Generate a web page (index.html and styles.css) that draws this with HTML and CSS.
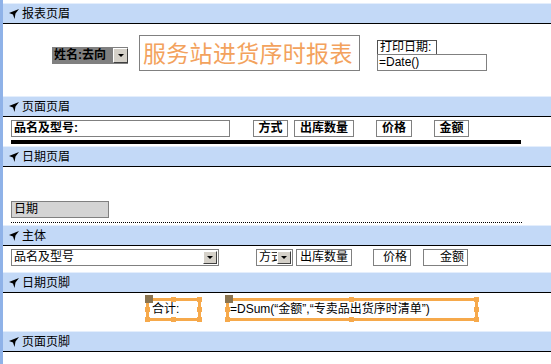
FILE: index.html
```html
<!DOCTYPE html>
<html>
<head>
<meta charset="utf-8">
<link rel="stylesheet" href="styles.css">
</head>
<body>
<div class="report">
  <div class="bar"><svg class="ico" viewBox="0 0 10 10"><path d="M10 0 L0 4 L4 5.5 L5.5 10 L6.5 4.5 Z"/></svg><span>报表页眉</span></div>
  <div class="sec sec-rh">
    <div class="name-combo"><span class="name-text">姓名:去向</span><span class="btn"><i class="tri"></i></span></div>
    <div class="title-box">服务站进货序时报表</div>
    <div class="date-group">
      <div class="date-label">打印日期:</div>
      <div class="date-expr">=Date()</div>
    </div>
  </div>

  <div class="bar"><svg class="ico" viewBox="0 0 10 10"><path d="M10 0 L0 4 L4 5.5 L5.5 10 L6.5 4.5 Z"/></svg><span>页面页眉</span></div>
  <div class="sec sec-ph">
    <div class="row ph-row">
      <div class="box bold ph1">品名及型号:</div>
      <div class="box bold center ph2">方式</div>
      <div class="box bold center ph3">出库数量</div>
      <div class="box bold center ph4">价格</div>
      <div class="box bold center ph5">金额</div>
    </div>
    <div class="thick-line"></div>
  </div>

  <div class="bar"><svg class="ico" viewBox="0 0 10 10"><path d="M10 0 L0 4 L4 5.5 L5.5 10 L6.5 4.5 Z"/></svg><span>日期页眉</span></div>
  <div class="sec sec-dh">
    <div class="box gray date-box">日期</div>
    <div class="dotted"></div>
  </div>

  <div class="bar"><svg class="ico" viewBox="0 0 10 10"><path d="M10 0 L0 4 L4 5.5 L5.5 10 L6.5 4.5 Z"/></svg><span>主体</span></div>
  <div class="sec sec-body">
    <div class="row body-row">
      <div class="box combo d1"><span class="ctext">品名及型号</span><span class="btn small"><i class="tri"></i></span></div>
      <div class="box combo d2"><span class="ctext">方式</span><span class="btn small"><i class="tri"></i></span></div>
      <div class="box center d3">出库数量</div>
      <div class="box right d4">价格</div>
      <div class="box right d5">金额</div>
    </div>
  </div>

  <div class="bar"><svg class="ico" viewBox="0 0 10 10"><path d="M10 0 L0 4 L4 5.5 L5.5 10 L6.5 4.5 Z"/></svg><span>日期页脚</span></div>
  <div class="sec sec-df">
    <div class="row df-row">
      <div class="sel s1"><span class="stext">合计:</span>
        <i class="mv"></i><i class="h h-tm"></i><i class="h h-tr"></i><i class="h h-rm"></i><i class="h h-br"></i><i class="h h-bm"></i><i class="h h-bl"></i><i class="h h-lm"></i>
      </div>
      <div class="sel s2"><span class="stext">=DSum(“金额”,“专卖品出货序时清单”)</span>
        <i class="mv"></i><i class="h h-tm"></i><i class="h h-tr"></i><i class="h h-rm"></i><i class="h h-br"></i><i class="h h-bm"></i><i class="h h-bl"></i><i class="h h-lm"></i>
      </div>
    </div>
  </div>

  <div class="bar"><svg class="ico" viewBox="0 0 10 10"><path d="M10 0 L0 4 L4 5.5 L5.5 10 L6.5 4.5 Z"/></svg><span>页面页脚</span></div>
  <div class="sec sec-pf"></div>
</div>
</body>
</html>
```

FILE: styles.css
```css
* { box-sizing: border-box; }
html, body { margin: 0; padding: 0; background: #fff; }
body {
  font-family: "Liberation Sans", "Noto Sans CJK SC", sans-serif;
  font-size: 12px;
  color: #000;
  width: 551px;
  height: 364px;
  overflow: hidden;
}
.report {
  border-left: 3px solid #8fb2e8;
  padding-top: 3px;
  height: 364px;
  background: #fff;
}
.bar {
  height: 21px;
  background: #c3d9f7;
  border-top: 1px solid #e4eefc;
  border-bottom: 1px solid #000;
  display: flex;
  align-items: center;
  padding-left: 6px;
  line-height: 1;
}
.bar span { font-size: 12px; }
.ico { width: 10px; height: 10px; margin-right: 3px; fill: #000; }

.sec { position: relative; display: flow-root; overflow: hidden; }
.sec-rh { height: 72px; display: flex; align-items: flex-start; overflow: visible; }
.sec-ph { height: 29px; }
.sec-dh { height: 58px; }
.sec-body { height: 26px; }
.sec-df { height: 38px; overflow: visible; }
.sec-pf { height: 20px; }

.row { display: flex; align-items: flex-start; }

/* report header */
.name-combo {
  margin-left: 49px;
  margin-top: 23px;
  width: 76px;
  height: 17px;
  background: #808080;
  display: flex;
  align-items: center;
}
.name-text { font-weight: bold; padding-left: 2px; width: 61px; white-space: nowrap; overflow: hidden; line-height: 17px; }
.btn {
  width: 15px;
  height: 15px;
  background: #d4d0c8;
  border-top: 1px solid #fff;
  border-left: 1px solid #fff;
  border-right: 1px solid #404040;
  border-bottom: 1px solid #404040;
  display: flex;
  align-items: center;
  justify-content: center;
  flex: none;
}
.btn.small { width: 14px; height: 13px; }
.tri {
  width: 0; height: 0;
  border-left: 3px solid transparent;
  border-right: 3px solid transparent;
  border-top: 3px solid #000;
}
.title-box {
  margin-left: 11px;
  margin-top: 11px;
  width: 221px;
  height: 36px;
  border: 1px solid #808080;
  color: #f3a25d;
  font-family: "Noto Sans CJK SC", sans-serif;
  font-size: 23px;
  line-height: 32px;
  padding-left: 3px;
  white-space: nowrap;
  letter-spacing: 0.3px;
}
.date-group { margin-left: 17px; margin-top: 16px; display: flex; flex-direction: column; }
.date-label {
  width: 60px; height: 15px;
  border: 1px solid #505050;
  line-height: 13px;
  padding-left: 2px;
  white-space: nowrap;
}
.date-expr {
  width: 110px; height: 17px;
  margin-top: -1px;
  border: 1px solid #808080;
  line-height: 15px;
  padding-left: 1px;
}

/* boxes */
.box {
  height: 17px;
  border: 1px solid #808080;
  background: #fff;
  line-height: 15px;
  padding-left: 2px;
  white-space: nowrap;
  overflow: hidden;
}
.bold { font-weight: bold; }
.center { text-align: center; padding-left: 0; }
.right { text-align: right; padding-right: 3px; }
.gray { background: #d4d4d4; }

.ph-row { margin-top: 3px; }
.ph1 { margin-left: 8px; width: 219px; }
.ph2 { margin-left: 23px; width: 35px; }
.ph3 { margin-left: 6px; width: 60px; }
.ph4 { margin-left: 22px; width: 36px; }
.ph5 { margin-left: 22px; width: 35px; }
.thick-line { margin-left: 8px; margin-top: 3px; width: 510px; height: 4px; background: #000; }

.date-box { margin-left: 8px; margin-top: 34px; width: 98px; }
.dotted { margin-left: 8px; margin-top: 4px; width: 511px; border-top: 1px dotted #000; }

.body-row { margin-top: 3px; }
.combo { display: flex; align-items: center; padding-right: 1px; }
.ctext { flex: 1; overflow: hidden; white-space: nowrap; }
.d1 { margin-left: 8px; width: 208px; }
.d2 { margin-left: 37px; width: 37px; }
.d3 { margin-left: 3px; width: 56px; }
.d4 { margin-left: 21px; width: 38px; }
.d5 { margin-left: 12px; width: 45px; }

/* footer selection */
.df-row { margin-top: 5px; }
.sel {
  position: relative;
  height: 23px;
  border: 3px solid #f6a94b;
  background: #fff;
  line-height: 17px;
  white-space: nowrap;
}
.stext { padding-left: 3px; }
.s1 { margin-left: 143px; width: 55px; }
.s2 { margin-left: 25px; width: 252px; }
.s2 .stext { padding-left: 1px; }
.mv { position: absolute; left: -4px; top: -6px; width: 8px; height: 8px; background: #8a7450; }
.h { position: absolute; width: 5px; height: 5px; background: #f6a94b; }
.h-tm { top: -4px; left: calc(50% - 3px); }
.h-tr { top: -4px; right: -4px; }
.h-rm { top: calc(50% - 3px); right: -4px; }
.h-br { bottom: -4px; right: -4px; }
.h-bm { bottom: -4px; left: calc(50% - 3px); }
.h-bl { bottom: -4px; left: -4px; }
.h-lm { top: calc(50% - 3px); left: -4px; }
```
